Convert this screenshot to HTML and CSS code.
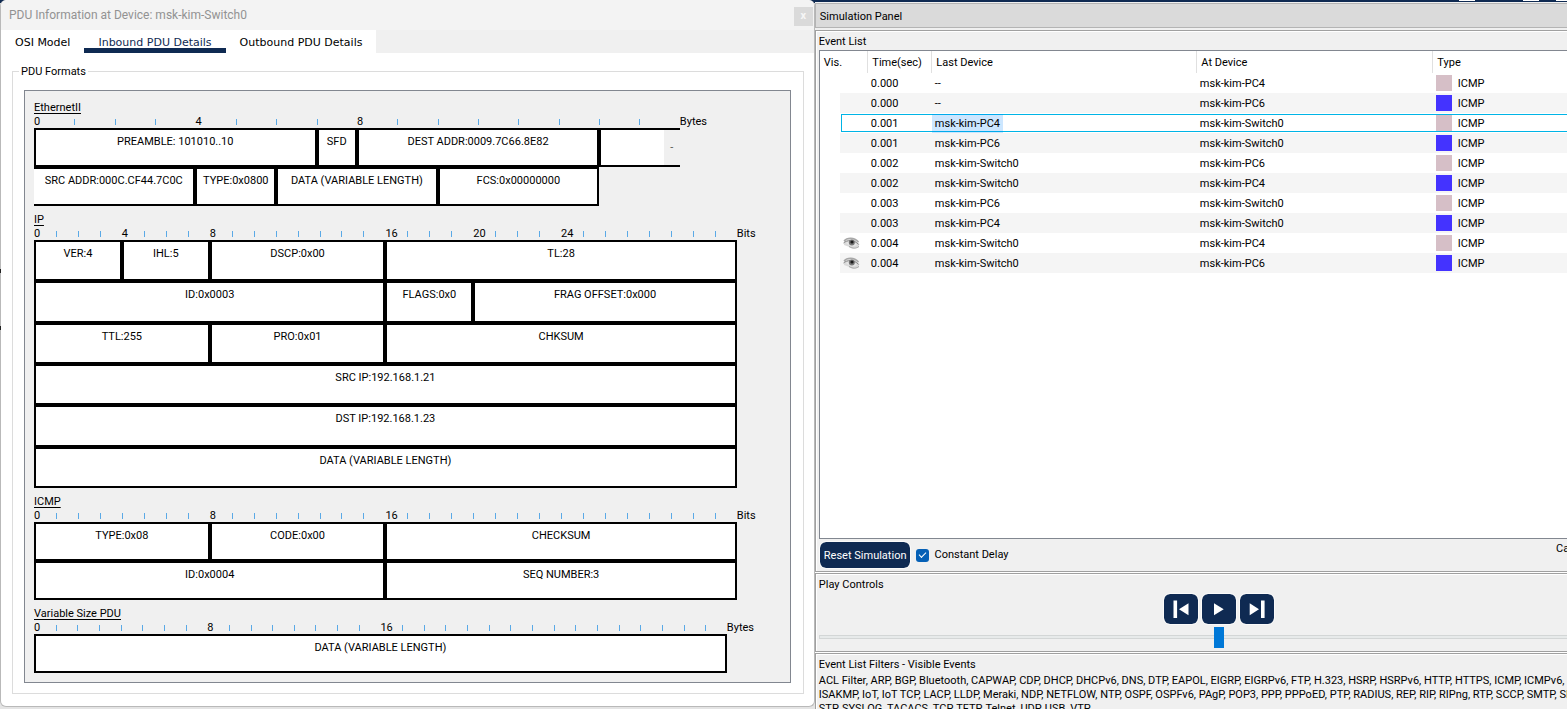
FILE: index.html
```html
<!DOCTYPE html>
<html lang="en">
<head>
<meta charset="utf-8">
<title>PDU Information at Device: msk-kim-Switch0</title>
<link rel="stylesheet" href="styles.css">
</head>
<body>
<div class="desktop">
<section class="dialog" aria-label="PDU Information">
  <header class="titlebar">
    <h1 class="title">PDU Information at Device: msk-kim-Switch0</h1>
    <button class="close" type="button" aria-label="Close">x</button>
  </header>
  <nav class="tabs">
    <button class="tab" type="button">OSI Model</button>
    <button class="tab active" type="button">Inbound PDU Details</button>
    <button class="tab" type="button">Outbound PDU Details</button>
  </nav>
  <div class="page">
    <fieldset class="group">
      <legend>PDU Formats</legend>
      <div class="formats">
        <section class="pdu bytes16">
          <h2>EthernetII</h2>
          <div class="ruler"><b>0</b><i></i><i></i><i></i><b>4</b><i></i><i></i><i></i><b>8</b><i></i><i></i><i></i><i></i><i></i><i></i><i></i></div>
          <span class="unit">Bytes</span>
          <div class="fields">
            <div class="f s7">PREAMBLE: 101010..10</div><div class="f s1">SFD</div><div class="f s6">DEST ADDR:0009.7C66.8E82</div><div class="f s2 more"><span></span><em>-</em></div>
            <div class="f s4 cont">SRC ADDR:000C.CF44.7C0C</div><div class="f s2">TYPE:0x0800</div><div class="f s4">DATA (VARIABLE LENGTH)</div><div class="f s4">FCS:0x00000000</div>
          </div>
        </section>
        <section class="pdu bits32">
          <h2>IP</h2>
          <div class="ruler"><b>0</b><i></i><i></i><i></i><b>4</b><i></i><i></i><i></i><b>8</b><i></i><i></i><i></i><i></i><i></i><i></i><i></i><b>16</b><i></i><i></i><i></i><b>20</b><i></i><i></i><i></i><b>24</b><i></i><i></i><i></i><i></i><i></i><i></i><i></i></div>
          <span class="unit">Bits</span>
          <div class="fields tall">
            <div class="f s4">VER:4</div><div class="f s4">IHL:5</div><div class="f s8">DSCP:0x00</div><div class="f s16">TL:28</div>
            <div class="f s16">ID:0x0003</div><div class="f s4">FLAGS:0x0</div><div class="f s12">FRAG OFFSET:0x000</div>
            <div class="f s8">TTL:255</div><div class="f s8">PRO:0x01</div><div class="f s16">CHKSUM</div>
            <div class="f s32">SRC IP:192.168.1.21</div>
            <div class="f s32">DST IP:192.168.1.23</div>
            <div class="f s32">DATA (VARIABLE LENGTH)</div>
          </div>
        </section>
        <section class="pdu bits32">
          <h2>ICMP</h2>
          <div class="ruler"><b>0</b><i></i><i></i><i></i><i></i><i></i><i></i><i></i><b>8</b><i></i><i></i><i></i><i></i><i></i><i></i><i></i><b>16</b><i></i><i></i><i></i><i></i><i></i><i></i><i></i><i></i><i></i><i></i><i></i><i></i><i></i><i></i><i></i></div>
          <span class="unit">Bits</span>
          <div class="fields">
            <div class="f s8">TYPE:0x08</div><div class="f s8">CODE:0x00</div><div class="f s16">CHECKSUM</div>
            <div class="f s16">ID:0x0004</div><div class="f s16">SEQ NUMBER:3</div>
          </div>
        </section>
        <section class="pdu bytes32">
          <h2>Variable Size PDU</h2>
          <div class="ruler"><b>0</b><i></i><i></i><i></i><i></i><i></i><i></i><i></i><b>8</b><i></i><i></i><i></i><i></i><i></i><i></i><i></i><b>16</b><i></i><i></i><i></i><i></i><i></i><i></i><i></i><i></i><i></i><i></i><i></i><i></i><i></i><i></i><i></i></div>
          <span class="unit">Bytes</span>
          <div class="fields">
            <div class="f s32">DATA (VARIABLE LENGTH)</div>
          </div>
        </section>
      </div>
    </fieldset>
  </div>
</section>
</div>

<aside class="dock">
  <div class="strip"><span class="blob"></span><span class="blob"></span><span class="blob near"></span></div>
  <h1 class="dock-title">Simulation Panel</h1>
  <section class="panel events">
    <h2 class="caption">Event List</h2>
    <div class="list">
      <table class="grid">
        <colgroup><col class="c-vis"><col class="c-time"><col class="c-last"><col class="c-at"><col></colgroup>
        <thead><tr><th>Vis.</th><th>Time(sec)</th><th>Last Device</th><th>At Device</th><th>Type</th></tr></thead>
        <tbody>
          <tr><td></td><td>0.000</td><td>--</td><td>msk-kim-PC4</td><td><span class="sw pink"></span>ICMP</td></tr>
          <tr><td></td><td>0.000</td><td>--</td><td>msk-kim-PC6</td><td><span class="sw blue"></span>ICMP</td></tr>
          <tr class="current"><td></td><td>0.001</td><td><mark>msk-kim-PC4</mark></td><td>msk-kim-Switch0</td><td><span class="sw pink"></span>ICMP</td></tr>
          <tr><td></td><td>0.001</td><td>msk-kim-PC6</td><td>msk-kim-Switch0</td><td><span class="sw blue"></span>ICMP</td></tr>
          <tr><td></td><td>0.002</td><td>msk-kim-Switch0</td><td>msk-kim-PC6</td><td><span class="sw pink"></span>ICMP</td></tr>
          <tr><td></td><td>0.002</td><td>msk-kim-Switch0</td><td>msk-kim-PC4</td><td><span class="sw blue"></span>ICMP</td></tr>
          <tr><td></td><td>0.003</td><td>msk-kim-PC6</td><td>msk-kim-Switch0</td><td><span class="sw pink"></span>ICMP</td></tr>
          <tr><td></td><td>0.003</td><td>msk-kim-PC4</td><td>msk-kim-Switch0</td><td><span class="sw blue"></span>ICMP</td></tr>
          <tr><td><svg class="eye" viewBox="0 0 17 12"><use href="#eye"/></svg></td><td>0.004</td><td>msk-kim-Switch0</td><td>msk-kim-PC4</td><td><span class="sw pink"></span>ICMP</td></tr>
          <tr><td><svg class="eye" viewBox="0 0 17 12"><use href="#eye"/></svg></td><td>0.004</td><td>msk-kim-Switch0</td><td>msk-kim-PC6</td><td><span class="sw blue"></span>ICMP</td></tr>
        </tbody>
      </table>
    </div>
    <div class="actions">
      <button class="reset" type="button">Reset Simulation</button>
      <label class="check"><input type="checkbox" checked><span>Constant Delay</span></label>
      <span class="captured">Captured to:</span>
    </div>
  </section>
  <section class="panel play">
    <h2 class="caption">Play Controls</h2>
    <div class="buttons">
      <button type="button" aria-label="Back"><svg viewBox="0 0 34 30"><path d="M9.5 6.500h3.600v17.500H9.500zM24.500 9.300v12L15 15.300z"/></svg></button>
      <button type="button" aria-label="Play"><svg viewBox="0 0 34 30"><path d="M12 9.300v12l9.700-6z"/></svg></button>
      <button type="button" aria-label="Forward"><svg viewBox="0 0 34 30"><path d="M9.700 9.300v12l9.300-6zM21 6.500h3.600v17.500H21z"/></svg></button>
    </div>
    <input class="speed" type="range" min="0" max="100" value="50" aria-label="Play speed">
  </section>
  <section class="panel filters">
    <h2 class="caption">Event List Filters - Visible Events</h2>
    <p>ACL Filter, ARP, BGP, Bluetooth, CAPWAP, CDP, DHCP, DHCPv6, DNS, DTP, EAPOL, EIGRP, EIGRPv6, FTP, H.323, HSRP, HSRPv6, HTTP, HTTPS, ICMP, ICMPv6,<br>ISAKMP, IoT, IoT TCP, LACP, LLDP, Meraki, NDP, NETFLOW, NTP, OSPF, OSPFv6, PAgP, POP3, PPP, PPPoED, PTP, RADIUS, REP, RIP, RIPng, RTP, SCCP, SMTP, SNMP, SSH,<br>STP, SYSLOG, TACACS, TCP, TFTP, Telnet, UDP, USB, VTP</p>
  </section>
</aside>

<svg class="defs" aria-hidden="true">
  <symbol id="eye" viewBox="0 0 17 12">
    <path d="M1 3.500C4 .5 11 0 15 4.500L16.500 7.500C15 10.500 12 12 8 10.500L1 8z" fill="#dadada"/>
    <path d="M1 4C4 .5 11 0 15.500 5" fill="none" stroke="#a8a8a8" stroke-width="1.500"/>
    <path d="M.5 6C4 3 11 2 15.500 7.500" fill="none" stroke="#8a8a8a"/>
    <path d="M3 6C6 3.500 12 4 14 8 10 10.500 6 9 3 6z" fill="#e6e6e6"/>
    <circle cx="8.800" cy="5.600" r="3" fill="#777"/>
    <circle cx="9" cy="5" r="1.600" fill="#1c1c1c"/>
    <path d="M6 9.500C10 12 13 11.500 16 9.500" fill="none" stroke="#a0a0a0"/>
  </symbol>
</svg>
</body>
</html>
```
FILE: styles.css
```css
* { box-sizing: border-box; }

html, body { height: 100%; }

body {
  margin: 0;
  display: flex;
  overflow: hidden;
  background: #f0f0f0;
  color: #000;
  font: 11px/14px Roboto, "Liberation Sans", Arial, sans-serif;
}

h1, h2, p { margin: 0; font-size: 11px; font-weight: 400; }

button, input { font: inherit; margin: 0; }

.defs { position: absolute; width: 0; height: 0; }

/* PDU window */

.desktop {
  flex: 0 0 52%;
  min-width: 0;
  padding-bottom: 2px;
  background: linear-gradient(#0f2a52 3px, #e4e4e4 3px);
}

.dialog {
  position: relative;
  height: 100%;
  display: flex;
  flex-direction: column;
  border: 1px solid #b9b9b9;
  border-top: 0;
  border-radius: 6px;
  background: #fff;
}

.dialog::before,
.dialog::after {
  content: "";
  position: absolute;
  left: -1px;
  top: 269px;
  width: 1px;
  height: 4px;
  background: #222;
}

.dialog::after { top: 326px; }

.titlebar {
  flex: none;
  height: 30px;
  padding: 0 1px 0 8px;
  display: flex;
  align-items: center;
  justify-content: space-between;
  background: #f3f3f3;
  border-radius: 6px 6px 0 0;
}

.title {
  font-size: 12px;
  line-height: 16px;
  color: #929292;
}

.close {
  width: 19px;
  height: 19px;
  margin-top: 3px;
  padding: 0 0 2px;
  border: 0;
  background: #dadada;
  color: #f6f6f6;
  font-weight: 700;
}

.tabs {
  flex: none;
  height: 23px;
  display: flex;
  background: #f0f0f0;
}

.tab {
  padding: 6px 14px 0;
  border: 0;
  border-bottom: 5px solid #fff;
  background: #fff;
  color: #000;
  font: 11px/14px "DejaVu Sans", Verdana, sans-serif;
}

.tab.active { border-bottom-color: #0f2a52; color: #0f2a52; }

.page { flex: 1; display: flex; padding: 11px 10px 12px 11px; }

.group {
  flex: 1;
  min-width: 0;
  margin: 0;
  padding: 12px 12px 10px 11px;
  border: 1px solid #dcdcdc;
}

.group legend { height: 14px; padding: 0 2px; margin-left: -5px; line-height: 16px; }

.formats {
  display: flex;
  flex-direction: column;
  gap: 6px;
  padding: 9px 0 9px 9px;
  border: 1px solid #828790;
  background: #f0f0f0;
}

.pdu {
  display: grid;
  grid-template-columns: 1fr 53px;
  --units: 32;
}

.bytes16 { grid-template-columns: 1fr 110px; --units: 16; }
.bytes32 { grid-template-columns: 1fr 63px; }

.pdu h2, .ruler, .unit, .caption { height: 14px; line-height: 16px; }

.pdu h2 { grid-column: 1 / -1; text-decoration: underline; text-underline-offset: 2px; }

.ruler, .fields {
  display: grid;
  grid-template-columns: repeat(var(--units), minmax(0, 1fr));
}

.ruler b { font-weight: 400; }
.ruler i { width: 1px; height: 6px; margin-top: 5px; background: #5aa9e6; }

.fields { grid-column: 1; grid-auto-rows: 39px; }
.fields.tall { height: 248px; grid-auto-rows: 1fr; }

.f {
  padding-top: 5px;
  border: 2px solid #000;
  background: #fff;
  text-align: center;
  white-space: nowrap;
}

.s1 { grid-column: span 1; }
.s2 { grid-column: span 2; }
.s4 { grid-column: span 4; }
.s6 { grid-column: span 6; }
.s7 { grid-column: span 7; }
.s8 { grid-column: span 8; }
.s12 { grid-column: span 12; }
.s16 { grid-column: span 16; }
.s32 { grid-column: span 32; }

.f.cont { border-left: 0; }

.f.more {
  display: flex;
  align-items: center;
  padding: 0;
  border-right: 0;
  background: #f0f0f0;
}

.more span { flex: 1; align-self: stretch; background: #fff; }
.more em { width: 16px; font-style: normal; color: #555; }

/* Simulation dock */

.dock {
  flex: 1;
  min-width: 0;
  display: flex;
  flex-direction: column;
  overflow: hidden;
}

.strip {
  flex: none;
  height: 2px;
  display: flex;
  gap: 48px;
  padding-left: 644px;
  overflow: hidden;
  background: #0f2a52;
}

.strip .blob { flex: none; width: 16px; height: 1px; background: #fff; }
.strip .near { margin-left: -31px; }

.dock-title {
  flex: none;
  margin: 1px 0 2px;
  padding: 6px 4px 3px;
  line-height: 14px;
  border: 1px solid #b4b4b4;
  border-right: 0;
  background: #dadada;
}

.panel {
  flex: none;
  width: calc(100% + 56px);
  display: flex;
  flex-direction: column;
  margin-bottom: 1px;
  border: 1px solid #a0a0a0;
  box-shadow: inset 1px 1px #fff, 0 1px #fff;
  padding: 3px;
}

.panel.events { flex: 1; min-height: 0; }

.list {
  flex: 1;
  min-height: 0;
  margin-top: 2px;
  border: 1px solid #828790;
  background: #fff;
}

.grid {
  width: 100%;
  table-layout: fixed;
  border-collapse: collapse;
  text-align: left;
}

.c-vis { width: 48px; }
.c-time { width: 64px; }
.c-last { width: 265px; }
.c-at { width: 236px; }

.grid th {
  height: 22px;
  padding: 2px 4px 0;
  border-right: 1px solid #e0e0e0;
  font-weight: 400;
}

.grid td { height: 20px; padding: 2px 3px 0; white-space: nowrap; }
.grid td:first-child { padding: 0 0 0 23px; }
.grid td:last-child { padding-top: 0; }

.grid tbody tr:nth-child(even) {
  background: linear-gradient(#f5f5f5, #f5f5f5) 20px 0 no-repeat;
}

.grid tbody .current {
  background:
    linear-gradient(#00b4e6, #00b4e6) 21px 1px / 100% 1px no-repeat,
    linear-gradient(#00b4e6, #00b4e6) 21px 18px / 100% 1px no-repeat,
    linear-gradient(#00b4e6, #00b4e6) 21px 1px / 1px 18px no-repeat;
}

.grid mark {
  margin-left: -3px;
  padding: 3px 3px;
  background: #0082ff33;
  color: #000;
}

.eye { display: block; width: 17px; height: 12px; }

.sw {
  display: inline-block;
  width: 16px;
  height: 16px;
  margin-right: 6px;
  vertical-align: -4px;
}

.pink { background: #d6bfc7; }
.blue { background: #4433ff; }

.actions { display: flex; align-items: center; gap: 6px; padding: 3px 1px 0; }

.reset {
  height: 26px;
  padding: 1px 4px 0;
  border: 0;
  border-radius: 6px;
  background: #0f2a52;
  color: #fff;
  outline: 1px solid #fafafa;
}

.check { display: flex; align-items: center; gap: 5px; line-height: 16px; }

.check input {
  appearance: none;
  width: 13px;
  height: 13px;
  border-radius: 3px;
  background: #0560b6;
  display: grid;
  place-items: center;
}

.check input::before {
  content: "";
  width: 6px;
  height: 3px;
  margin-top: -2px;
  border: solid #fff;
  border-width: 0 0 1px 1px;
  transform: rotate(-45deg);
}

.captured { align-self: flex-start; margin-left: auto; width: 62px; white-space: nowrap; }

.buttons { display: flex; justify-content: center; gap: 4px; margin-top: 3px; }

.buttons button {
  width: 34px;
  height: 30px;
  padding: 0;
  border: 0;
  border-radius: 6px;
  background: #0f2a52;
  outline: 1px solid #fafafa;
}

.buttons svg { display: block; width: 34px; height: 30px; fill: #fff; }

.speed {
  appearance: none;
  width: 100%;
  height: 20px;
  margin: 3px 0 1px;
  background: transparent;
}

.speed::-webkit-slider-runnable-track {
  height: 4px;
  border: 1px solid #d3d6d6;
  background: #e7eaea;
}

.speed::-webkit-slider-thumb {
  appearance: none;
  width: 10px;
  height: 21px;
  margin-top: -9px;
  background: #0078d7;
}

.filters { height: 56px; overflow: hidden; margin-bottom: 0; border-bottom: 0; }
.filters p { margin-top: 3px; white-space: nowrap; }
```
